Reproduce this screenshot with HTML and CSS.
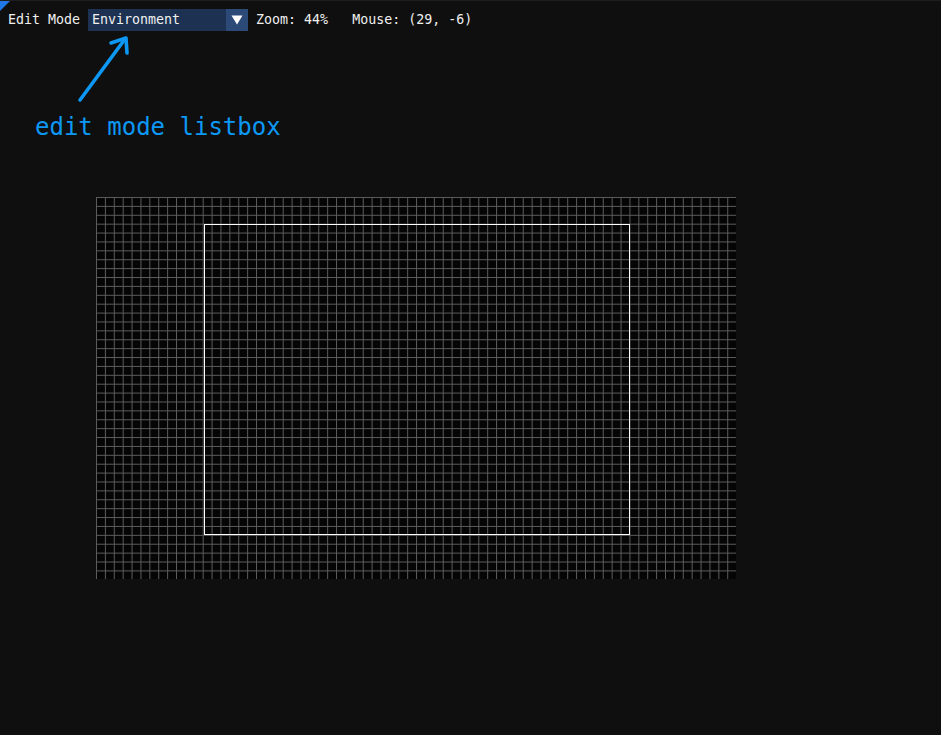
FILE: index.html
```html
<!DOCTYPE html>
<html>
<head>
<meta charset="utf-8">
<link rel="stylesheet" href="styles.css">
</head>
<body>
<div class="app">
  <div class="corner"></div>
  <div class="toolbar">
    <span class="label">Edit Mode</span>
    <div class="combo">
      <span class="combo-text">Environment</span>
      <span class="combo-btn"><svg width="12" height="10" viewBox="0 0 12 10"><polygon points="0.5,0.5 11.5,0.5 6,9.5" fill="#ffffff"/></svg></span>
    </div>
    <span class="status">Zoom: 44%   Mouse: (29, -6)</span>
  </div>
  <div class="annotation">
    <svg class="arrow" width="60" height="75" viewBox="0 0 60 75">
      <g stroke="#0c98f4" stroke-width="3.6" stroke-linecap="round" stroke-linejoin="round" fill="none">
        <line x1="10" y1="69" x2="55" y2="8"/>
        <polyline points="41,12 56,7 57,22"/>
      </g>
    </svg>
    <div class="note">edit mode listbox</div>
  </div>
  <div class="canvas">
    <div class="frame"></div>
  </div>
</div>
</body>
</html>
```
FILE: styles.css
```css
html, body {
  margin: 0;
  padding: 0;
  background: #0f0f0f;
}
.app {
  position: relative;
  width: 941px;
  height: 735px;
  border-top: 1px solid #1d1d1d;
  box-sizing: border-box;
  font-family: "DejaVu Sans Mono", "Liberation Mono", monospace;
  color: #f0f0f0;
  overflow: hidden;
}
.corner {
  position: absolute;
  left: 0;
  top: -1px;
  width: 11px;
  height: 11px;
  background: #1f78e6;
  clip-path: polygon(0 0, 100% 0, 0 100%);
}
.toolbar {
  display: flex;
  align-items: center;
  gap: 8px;
  padding: 8px 8px 0 8px;
  height: 22px;
  font-size: 13.3px;
}
.label, .status {
  white-space: pre;
  line-height: 22px;
}
.combo {
  display: flex;
  width: 160px;
  height: 22px;
}
.combo-text {
  flex: 1;
  background: #1d3153;
  padding-left: 4px;
  line-height: 22px;
}
.combo-btn {
  width: 22px;
  background: #2c4a78;
  display: flex;
  align-items: center;
  justify-content: center;
}
.annotation {
  position: relative;
  height: 166px;
}
.arrow {
  position: absolute;
  left: 70px;
  top: 0;
}
.note {
  padding-top: 82px;
  padding-left: 35px;
  font-size: 24px;
  line-height: 28px;
  color: #0c98f4;
  white-space: pre;
}
.canvas {
  position: relative;
  margin-left: 96px;
  width: 640px;
  height: 382px;
  background-color: #050505;
  background-image:
    linear-gradient(to right, #5c5c5c 1px, transparent 1px),
    linear-gradient(to bottom, #5c5c5c 1px, transparent 1px);
  background-size: 8.9px 8.9px;
  background-position: 0 0;
}
.frame {
  position: absolute;
  left: 108px;
  top: 27px;
  width: 426px;
  height: 311px;
  border: 1.5px solid #ffffff;
  box-sizing: border-box;
}
```
